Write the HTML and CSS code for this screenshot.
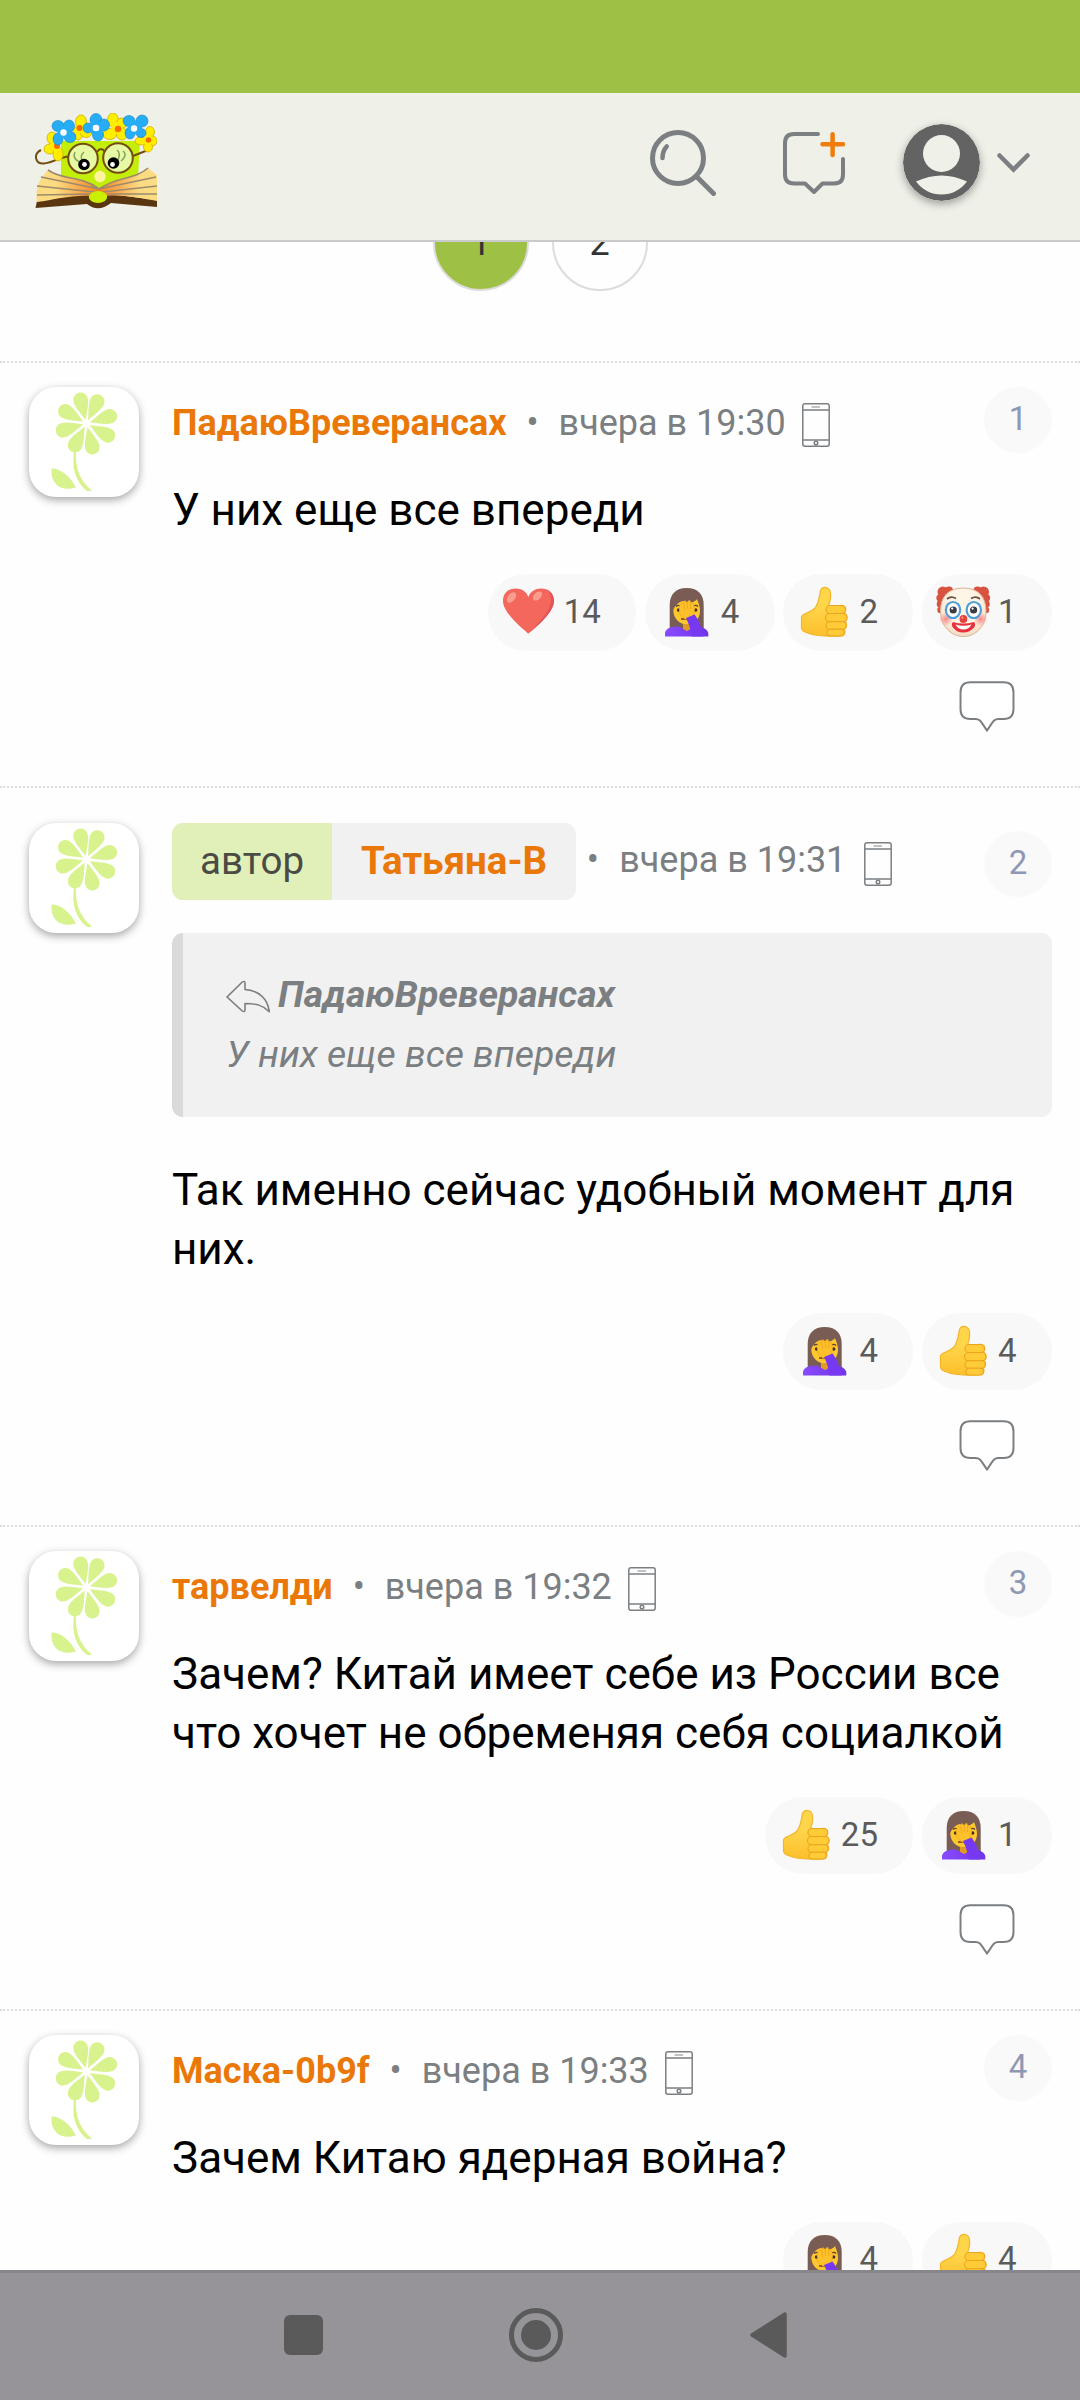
FILE: index.html
```
<!DOCTYPE html>
<html lang="ru">
<head>
    <meta charset="UTF-8">
    <meta name="viewport" content="width=device-width, initial-scale=1.0">
    <title>Форум</title>
    <link rel="stylesheet" href="styles.css">
</head>
<body>
    <!-- shared icons -->
    <svg class="sprite" width="0" height="0">
        <defs>
            <linearGradient id="thumbFill" x1="0" y1="0" x2="0" y2="1">
                <stop offset="0.4" stop-color="#ffd54a"/>
                <stop offset="1" stop-color="#fcbf2b"/>
            </linearGradient>
            <linearGradient id="sleeve" x1="0" y1="0" x2="1" y2="0">
                <stop offset="0" stop-color="#8a4bff"/>
                <stop offset="1" stop-color="#6f33e8"/>
            </linearGradient>
            <radialGradient id="clownFace" cx="0.5" cy="0.4" r="0.6">
                <stop offset="0.6" stop-color="#fff5e6"/>
                <stop offset="1" stop-color="#f5d9c0"/>
            </radialGradient>
            <radialGradient id="cheek">
                <stop offset="0" stop-color="#fa8a8a"/>
                <stop offset="1" stop-color="#fa8a8a" stop-opacity="0"/>
            </radialGradient>
            <linearGradient id="pageLeft" x1="0" y1="0" x2="1" y2="0">
                <stop offset="0.3" stop-color="#fbdc83"/>
                <stop offset="1" stop-color="#f58220"/>
            </linearGradient>
            <linearGradient id="pageRight" x1="1" y1="0" x2="0" y2="0">
                <stop offset="0.3" stop-color="#fbdc83"/>
                <stop offset="1" stop-color="#f58220"/>
            </linearGradient>
            <path id="petal" d="M0 -3.5 C-2 -9 -7.3 -18 -7.3 -24.5 A7.3 7.3 0 0 1 7.3 -24.5 C7.3 -18 2 -9 0 -3.5Z"/>
        </defs>
        <symbol id="flower" viewBox="0 0 110 110">
            <g fill="#d8f28d">
                <g transform="translate(57.5 36.5)">
                    <use href="#petal" transform="rotate(-14)"/>
                    <use href="#petal" transform="rotate(26)"/>
                    <use href="#petal" transform="rotate(73)"/>
                    <use href="#petal" transform="rotate(119)"/>
                    <use href="#petal" transform="rotate(166)"/>
                    <use href="#petal" transform="rotate(208)"/>
                    <use href="#petal" transform="rotate(254)"/>
                    <use href="#petal" transform="rotate(300)"/>
                </g>
                <path d="M45.3 63 H47 C46 82 51 93 63 104 H58 C47 95 42 82 45.3 63Z"/>
                <path d="M22.5 81.5 C31 81 41 89 47 100.5 C33 105 21 98 22.5 81.5Z"/>
            </g>
        </symbol>
        <symbol id="phone" viewBox="0 0 28 44">
            <g fill="none" stroke="#7b7f82" stroke-width="1.5">
                <rect x="0.8" y="0.8" width="26.4" height="42.4" rx="2.2"/>
                <path d="M1 7H27M1 37H27"/>
                <path d="M9.5 4H18" stroke="#bbb" stroke-width="1.8"/>
                <circle cx="14" cy="40" r="1.8"/>
            </g>
        </symbol>
        <symbol id="bubble" viewBox="0 0 56 52">
            <path d="M11 1.2H45Q55 1.2 55 11.5V28.5Q55 38.7 45 38.7H39.5C35 38.7 34 42 28 50.5C22 42 21 38.7 16.5 38.7H11Q1 38.7 1 28.5V11.5Q1 1.2 11 1.2Z" fill="#fff" stroke="#7b7f82" stroke-width="2"/>
        </symbol>
        <symbol id="heart" viewBox="0 0 55 52">
            <path d="M26.3 47.8C24 45 1 28 1 15C1 7 6.5 2.5 13.5 2.5C20 2.5 24.5 5.5 26.3 11C28.5 5.5 33 2.5 39 2.5C46.5 2.5 52 7 52 15C52 28 29 45 26.3 47.8Z" fill="#f4675c"/>
            <path d="M45 3.8C49.5 6 52 10 52 15C52 28 29 45 26.3 47.8C34 39 49 26 49 14C49 9 47.5 6 45 3.8Z" fill="#e0555a"/>
            <ellipse cx="9.5" cy="11.5" rx="3.6" ry="6" transform="rotate(38 9.5 11.5)" fill="#fb9c90"/>
            <ellipse cx="35.5" cy="10" rx="3.5" ry="5.5" transform="rotate(45 35.5 10)" fill="#fb9c90"/>
        </symbol>
        <symbol id="facepalm" viewBox="0 0 55 52">
            <path d="M27.7 2C17 2 10.7 8 10.7 19V43H44.7V19C44.7 8 38.5 2 27.7 2Z" fill="#795d54"/>
            <path d="M24 34H32V45H24Z" fill="#e59f1b"/>
            <path d="M14.3 24C16 20 19 16 24 15C31 19 37 15 38 13C40 18 41 21 41 25C41 33 35 38.5 28 38.5C20 38.5 14.3 32 14.3 24Z" fill="#fcc72f"/>
            <path d="M17 20.5Q19 18.5 21.5 20M34.5 20Q37 18.5 39 20.5" stroke="#5d4037" stroke-width="1.4" fill="none"/>
            <circle cx="19.5" cy="24" r="1.7" fill="#42301f"/>
            <circle cx="36.7" cy="24" r="1.7" fill="#42301f"/>
            <path d="M22 33L29 33" stroke="#7a4a12" stroke-width="1.6"/>
            <path d="M6 50.5V47C7 42 12 40.5 20 40.5L28 45L36 40.5C44 40.5 48 43 49.3 47V50.5Z" fill="url(#sleeve)"/>
            <path d="M24.5 41L28 45L31.5 41V38H24.5Z" fill="#e09a25"/>
            <path d="M21 29L20 21L22.5 16.5L24 18L26 14.5L28 16.5L30.5 14L32 17L34.5 17L35.5 23L34.5 29L30 33L26 33Z" fill="#fcc02a" stroke="#f3a71c" stroke-width="0.7"/>
            <path d="M24.5 17.5L26 24M28 16.5L28.7 23M31.8 17L31.5 23" stroke="#eda31c" stroke-width="0.8"/>
            <path d="M27 32L35.5 28.5C39 33 43 41 44.5 50.5H32.5C32 44 30 38 27 32Z" fill="#7638f0"/>
        </symbol>
        <symbol id="thumb" viewBox="0 0 55 52">
            <path d="M4.5 31C5 27 13 27.5 18 22C22 17 22.5 9 23.5 4.5C24.3 1.5 27.5 0.8 30.5 2C33.5 3.5 34 8 33.5 12C33.2 15.5 32 18 31.5 20.5L44.5 19.3C49 19.5 50 24 47.5 27C51 29 50.8 33.5 48.3 35.3C50.5 38 50 41.5 47.5 43C49 47 47 50 43.5 50C33 50.5 20 50.5 12 47.5C8.5 46.5 4.5 45 4.5 42Z" fill="url(#thumbFill)" stroke="#f3b52c" stroke-width="1.2"/>
            <g fill="#ffcb37" stroke="#eca521" stroke-width="1.1">
                <rect x="29" y="19.5" width="19.5" height="8" rx="3.8"/>
                <rect x="28.5" y="27.5" width="21.5" height="8.2" rx="4"/>
                <rect x="29" y="35.7" width="20.2" height="7.6" rx="3.8"/>
                <rect x="30" y="43.3" width="17.3" height="6.7" rx="3.3"/>
            </g>
        </symbol>
        <symbol id="clown" viewBox="0 0 55 52">
            <g fill="#d9523f">
                <circle cx="7" cy="6" r="5.5"/><circle cx="13" cy="4.5" r="4"/><circle cx="4.5" cy="12" r="4.2"/><circle cx="4.5" cy="18" r="3.8"/><circle cx="4.5" cy="24" r="3.2"/>
                <circle cx="47.5" cy="6" r="5.5"/><circle cx="41.5" cy="4.500" r="4"/><circle cx="50" cy="12" r="4.2"/><circle cx="50" cy="18" r="3.8"/><circle cx="50" cy="24" r="3.2"/>
            </g>
            <path d="M27.3 2C12 2 4.5 11 4.5 25C4.5 40 15 50.5 27.3 50.5C40 50.5 50 40 50 25C50 11 42.500 2 27.3 2Z" fill="url(#clownFace)" stroke="#d7b59b" stroke-width="1"/>
            <circle cx="10" cy="33" r="7" fill="url(#cheek)"/>
            <circle cx="44.5" cy="33" r="7" fill="url(#cheek)"/>
            <path d="M11 13Q15 9.5 20 12.5M35 12.5Q40 9.5 44 13" stroke="#6d4c41" stroke-width="1.7" fill="none"/>
            <g fill="#fff" stroke="#4f9fd6" stroke-width="2.2">
                <ellipse cx="17" cy="24" rx="7.2" ry="8"/>
                <ellipse cx="37.8" cy="24" rx="7.2" ry="8"/>
            </g>
            <circle cx="17.2" cy="24" r="3.6" fill="#3b3b46"/>
            <circle cx="37.6" cy="24" r="3.6" fill="#3b3b46"/>
            <circle cx="16.2" cy="22.6" r="1.1" fill="#fff"/>
            <circle cx="36.6" cy="22.6" r="1.1" fill="#fff"/>
            <path d="M17 36Q27.3 39 38 36Q40 38 38.5 41Q34 46.5 27.3 46.5Q20.5 46.5 16.5 41Q15 38 17 36Z" fill="#e8313c"/>
            <path d="M19.5 38.5Q27.3 41 35.5 38.5Q33 43.5 27.3 43.5Q22 43.5 19.5 38.5Z" fill="#fff"/>
            <circle cx="27.4" cy="33" r="3.9" fill="#e5403c"/>
            <circle cx="26.4" cy="31.7" r="1.1" fill="#ff9187"/>
        </symbol>
    </svg>

    <div class="screen">
        <div class="status-bar"></div>

        <header class="header">
            <svg class="logo" viewBox="0 0 122 96">
                <path d="M26 28H105L103 64L90 66L64 76L26 64Z" fill="#c3ee0a"/>
                <!-- book -->
                <path d="M0.5 95L2 88L50 81H74L122 87V94L76 90Q63 100 52 91Z" fill="#5a3610"/>
                <path d="M13 57C28 68 46 62 64 76V84C45 80 22 86 2 89C0 75 4 66 13 57Z" fill="url(#pageLeft)"/>
                <path d="M113 55C98 68 84 62 64 76V84C84 80 104 85 122 88V62Z" fill="url(#pageRight)"/>
                <path d="M13 57C28 68 46 62 64 76C84 62 98 68 113 55M6 64L64 76L121 64M2 73L60 79M122 73L68 79M2 82L56 81M122 81L72 81" fill="none" stroke="#9d8a6d" stroke-width="1.6"/>
                <ellipse cx="63" cy="84" rx="9.2" ry="6" fill="#c8f000"/>
                <circle cx="65" cy="63.5" r="5.7" fill="#fff49c"/>
                <!-- glasses -->
                <path d="M6 37C-2 41 0 51 9 50.5C17 50 25 44 34 43.5M98 43L113 37M62 39Q66 33 70 39" fill="none" stroke="#734d12" stroke-width="2"/>
                <circle cx="48" cy="45.5" r="14.8" fill="#e6f9a3" stroke="#734d12" stroke-width="2"/>
                <circle cx="83" cy="45" r="14.8" fill="#e6f9a3" stroke="#734d12" stroke-width="2"/>
                <path d="M40 39Q37 45 44 49M49 39Q44 43 48 49M82 37Q86 40 83 47M88 38Q93 42 86 48" fill="none" stroke="#8ba064" stroke-width="1.5"/>
                <circle cx="49" cy="51.5" r="5.8" fill="#000"/>
                <circle cx="78.5" cy="50" r="5.8" fill="#000"/>
                <circle cx="49.5" cy="51.5" r="2.4" fill="#fff"/>
                <circle cx="77.5" cy="51.5" r="2.4" fill="#fff"/>
                <!-- wreath -->
                <g fill="#ffee00" stroke="#cfae00" stroke-width="0.8">
                    <ellipse cx="17" cy="25" rx="5" ry="6"/><ellipse cx="15" cy="36" rx="6" ry="5"/><ellipse cx="23" cy="41" rx="5" ry="7"/>
                    <ellipse cx="46" cy="9" rx="5.5" ry="7"/><ellipse cx="43" cy="20" rx="5" ry="7"/><ellipse cx="51" cy="19" rx="6" ry="5.5"/>
                    <ellipse cx="78" cy="7" rx="5.5" ry="7"/><ellipse cx="75" cy="21" rx="7" ry="5.5"/><ellipse cx="87" cy="10" rx="5.5" ry="5"/><ellipse cx="87" cy="21" rx="5.5" ry="6"/>
                    <ellipse cx="115" cy="19" rx="4.5" ry="5.5"/><ellipse cx="106" cy="28" rx="6" ry="4"/><ellipse cx="117" cy="28" rx="5" ry="5"/><ellipse cx="113" cy="34" rx="4.5" ry="5"/>
                </g>
                <g fill="#ffee00">
                    <circle cx="20" cy="33" r="5"/><circle cx="46" cy="15" r="5"/><circle cx="82" cy="15" r="6"/><circle cx="113" cy="27" r="5"/>
                </g>
                <g fill="#ff6a00">
                    <circle cx="22" cy="33" r="3"/><circle cx="44.5" cy="15" r="3"/><circle cx="83" cy="16" r="3.2"/><circle cx="113.5" cy="27" r="2.8"/>
                </g>
                <g fill="#26adf5" stroke="#1585c4" stroke-width="0.6">
                    <ellipse cx="23" cy="13" rx="6" ry="5.5"/><ellipse cx="34" cy="13" rx="5.5" ry="6"/><ellipse cx="23" cy="26" rx="5" ry="6"/><ellipse cx="35" cy="24" rx="6" ry="5.5"/>
                    <ellipse cx="61" cy="7" rx="6" ry="6.5"/><ellipse cx="53" cy="15" rx="5" ry="5"/><ellipse cx="69" cy="12" rx="5.5" ry="6"/><ellipse cx="63" cy="22" rx="5.5" ry="6"/>
                    <ellipse cx="94" cy="8" rx="6" ry="5.5"/><ellipse cx="107" cy="8" rx="6" ry="6"/><ellipse cx="95" cy="20" rx="5" ry="6"/><ellipse cx="106" cy="20" rx="5" ry="4.5"/>
                </g>
                <g fill="#26adf5">
                    <circle cx="29" cy="19" r="6.5"/><circle cx="61" cy="15" r="7"/><circle cx="100" cy="14.5" r="7"/>
                </g>
                <g fill="#fff">
                    <circle cx="28.5" cy="19.5" r="3.2"/><circle cx="61" cy="15" r="3.3"/><circle cx="99" cy="15.5" r="3.2"/>
                </g>
            </svg>
            <div class="header-actions">
                <svg class="icon-search" viewBox="0 0 66 66" fill="none" stroke="#7b7f82" stroke-width="5" stroke-linecap="round">
                    <circle cx="28" cy="28" r="25.5"/>
                    <path d="M46.5 46.5L63.5 63.5"/>
                    <path d="M16.7 16.5Q12.5 21 12.5 28" stroke-width="4.5"/>
                </svg>
                <svg class="icon-new" viewBox="0 0 62 62" fill="none" stroke="#7b7f82" stroke-width="4" stroke-linejoin="round" stroke-linecap="round">
                    <path d="M35 2H11Q2 2 2 11V42.5Q2 51.5 11 51.5H22L31 60L39.5 51.5H51Q60 51.5 60 42.5V27"/>
                    <path d="M39.5 12.3H60M49.6 2.3V23" stroke="#ee7d0c" stroke-width="4.5"/>
                </svg>
                <svg class="icon-user" viewBox="0 0 77 77">
                    <circle cx="38.5" cy="38.5" r="38.5" fill="#636363"/>
                    <circle cx="38.5" cy="29.5" r="18.5" fill="#eff0e8"/>
                    <path d="M13 57.5Q38.5 45.5 64 57.5Q54 70.5 38.5 70.5Q23 70.5 13 57.5Z" fill="#eff0e8"/>
                </svg>
                <svg class="icon-chevron" viewBox="0 0 33 20">
                    <path d="M2.5 2.5L16.5 16.5L30.5 2.5" fill="none" stroke="#7b7f82" stroke-width="4.5" stroke-linecap="round"/>
                </svg>
            </div>
        </header>

        <main class="feed">
            <nav class="pages">
                <a class="page current">1</a>
                <a class="page">2</a>
            </nav>

            <article class="comment">
                <svg class="avatar"><use href="#flower"/></svg>
                <div class="content">
                    <div class="meta">
                        <a class="name">ПадаюВреверансах</a>
                        <span class="dot">•</span>
                        <span class="date">вчера в 19:30</span>
                        <svg class="phone"><use href="#phone"/></svg>
                        <span class="number">1</span>
                    </div>
                    <p class="text">У них еще все впереди</p>
                    <div class="reactions">
                        <span class="reaction"><svg class="emoji"><use href="#heart"/></svg>14</span>
                        <span class="reaction"><svg class="emoji"><use href="#facepalm"/></svg>4</span>
                        <span class="reaction"><svg class="emoji"><use href="#thumb"/></svg>2</span>
                        <span class="reaction"><svg class="emoji"><use href="#clown"/></svg>1</span>
                    </div>
                    <svg class="reply"><use href="#bubble"/></svg>
                </div>
            </article>

            <article class="comment by-author">
                <svg class="avatar"><use href="#flower"/></svg>
                <div class="content">
                    <div class="meta">
                        <div class="author">
                            <span class="author-label">автор</span>
                            <a class="name">Татьяна-В</a>
                        </div>
                        <span class="dot">•</span>
                        <span class="date">вчера в 19:31</span>
                        <svg class="phone"><use href="#phone"/></svg>
                        <span class="number">2</span>
                    </div>
                    <blockquote class="quote">
                        <div class="quote-name">
                            <svg class="quote-icon" viewBox="0 0 44 38" preserveAspectRatio="none">
                                <path d="M1 19.5L16 2.5Q19 0 19 4V11C33 12 42 22 43.3 36.5C37 29 30 27 19 27V34Q19 38 16 35.5Z" fill="none" stroke="#7b7f82" stroke-width="1.6" stroke-linejoin="round"/>
                            </svg>
                            <span>ПадаюВреверансах</span>
                        </div>
                        <p class="quote-text">У них еще все впереди</p>
                    </blockquote>
                    <p class="text">Так именно сейчас удобный момент для них.</p>
                    <div class="reactions">
                        <span class="reaction"><svg class="emoji"><use href="#facepalm"/></svg>4</span>
                        <span class="reaction"><svg class="emoji"><use href="#thumb"/></svg>4</span>
                    </div>
                    <svg class="reply"><use href="#bubble"/></svg>
                </div>
            </article>

            <article class="comment">
                <svg class="avatar"><use href="#flower"/></svg>
                <div class="content">
                    <div class="meta">
                        <a class="name">тарвелди</a>
                        <span class="dot">•</span>
                        <span class="date">вчера в 19:32</span>
                        <svg class="phone"><use href="#phone"/></svg>
                        <span class="number">3</span>
                    </div>
                    <p class="text">Зачем? Китай имеет себе из России все что хочет не обременяя себя социалкой</p>
                    <div class="reactions">
                        <span class="reaction"><svg class="emoji"><use href="#thumb"/></svg>25</span>
                        <span class="reaction"><svg class="emoji"><use href="#facepalm"/></svg>1</span>
                    </div>
                    <svg class="reply"><use href="#bubble"/></svg>
                </div>
            </article>

            <article class="comment">
                <svg class="avatar"><use href="#flower"/></svg>
                <div class="content">
                    <div class="meta">
                        <a class="name">Маска-0b9f</a>
                        <span class="dot">•</span>
                        <span class="date">вчера в 19:33</span>
                        <svg class="phone"><use href="#phone"/></svg>
                        <span class="number">4</span>
                    </div>
                    <p class="text">Зачем Китаю ядерная война?</p>
                    <div class="reactions">
                        <span class="reaction"><svg class="emoji"><use href="#facepalm"/></svg>4</span>
                        <span class="reaction"><svg class="emoji"><use href="#thumb"/></svg>4</span>
                    </div>
                </div>
            </article>
        </main>

        <footer class="system-nav">
            <svg class="nav-recent" viewBox="0 0 39 40"><rect width="39" height="40" rx="6" fill="#5a5a5a"/></svg>
            <svg class="nav-home" viewBox="0 0 54 54">
                <circle cx="27" cy="27" r="24.5" fill="none" stroke="#5a5a5a" stroke-width="5"/>
                <circle cx="27" cy="27" r="15" fill="#5a5a5a"/>
            </svg>
            <svg class="nav-back" viewBox="0 0 37 46"><path d="M2 23L35 2V44Z" fill="#5a5a5a" stroke="#5a5a5a" stroke-width="3.5" stroke-linejoin="round"/></svg>
        </footer>
    </div>
</body>
</html>
```
FILE: styles.css
```
* {
    box-sizing: border-box;
}
body {
    margin: 0;
    font-family: Roboto, "Noto Sans", sans-serif;
    font-size: 36px;
    color: #000;
    background: #fefefe;
}
svg {
    display: block;
    flex-shrink: 0;
}
.sprite {
    position: absolute;
}
.screen {
    display: flex;
    flex-direction: column;
    width: 1080px;
    height: 2400px;
    overflow: hidden;
}
.status-bar {
    height: 93px;
    flex-shrink: 0;
    background: #9dc045;
}

/* header */
.header {
    display: flex;
    justify-content: space-between;
    height: 149px;
    flex-shrink: 0;
    padding: 20px 50px 0 35px;
    background: #eff0e8;
    border-bottom: 2px solid #c9cacb;
}
.logo {
    width: 122px;
    height: 96px;
}
.header-actions {
    display: flex;
    align-items: center;
    height: 100px;
}
.icon-search {
    width: 66px;
    height: 66px;
    margin-right: 67px;
}
.icon-new {
    width: 62px;
    height: 62px;
    margin-right: 58px;
}
.icon-user {
    width: 77px;
    height: 77px;
    margin: 0 17px 1px 0;
    border-radius: 50%;
    box-shadow: 0 3px 8px rgba(0, 0, 0, 0.35);
}
.icon-chevron {
    width: 33px;
    height: 20px;
}

/* feed */
.feed {
    flex: 1;
    min-height: 0;
    overflow: hidden;
}
.pages {
    display: flex;
    justify-content: center;
    gap: 23px;
    margin-top: -47px;
    padding-bottom: 70px;
}
.page {
    width: 96px;
    height: 96px;
    border: 2px solid #dcdcdc;
    border-radius: 50%;
    line-height: 92px;
    text-align: center;
    color: #333;
}
.page.current {
    background: #9dc045;
}
.comment {
    display: flex;
    gap: 33px;
    padding: 24px 28px 53.5px 29px;
    border-top: 2px dotted #ddd;
}
.by-author {
    padding-top: 35.5px;
}
.avatar {
    width: 110px;
    height: 110px;
    border-radius: 27px;
    background: #fff;
    box-shadow: 0 3px 8px rgba(0, 0, 0, 0.35);
}
.content {
    flex: 1;
    min-width: 0;
}
.meta {
    display: flex;
    align-items: flex-start;
    height: 66px;
    margin-bottom: 28px;
    line-height: 72px;
    white-space: nowrap;
    color: #7b7f82;
}
.name {
    font-weight: 700;
    color: #ea7808;
}
.dot {
    width: 52px;
    text-align: center;
}
.phone {
    width: 28px;
    height: 44px;
    margin: 16px 0 0 16px;
}
.number {
    width: 68px;
    height: 66px;
    margin-left: auto;
    border-radius: 50%;
    background: #f9f9f9;
    font-size: 33px;
    line-height: 64px;
    text-align: center;
    color: #8e97b3;
}
.by-author .meta {
    height: 77px;
    margin-bottom: 33px;
    line-height: 75px;
}
.by-author .dot {
    width: 43px;
    padding-right: 10px;
}
.by-author .phone {
    margin: 19px 0 0 18px;
}
.by-author .number {
    margin-top: 8px;
    line-height: 64px;
}
.author {
    display: flex;
    height: 77px;
    padding-right: 29px;
    border-radius: 11px;
    overflow: hidden;
    background: #f1f1f1;
    font-size: 38.5px;
}
.author-label {
    margin-right: 29px;
    padding: 0 28px;
    background: #e1efb9;
    color: #4b4b45;
}
.quote {
    height: 184px;
    margin: 0 0 43.5px;
    padding: 32px 44px 32px 43px;
    border-left: 11px solid #dadada;
    border-radius: 11px;
    background: #f1f1f1;
    font-size: 37.4px;
    font-style: italic;
    line-height: 59.5px;
    color: #7b7f82;
}
.quote-name {
    display: flex;
    gap: 8px;
    font-weight: 700;
}
.quote-icon {
    width: 44px;
    height: 33px;
    margin-top: 15px;
}
.quote-text {
    margin: 0;
}
.text {
    margin: 0 0 33.5px;
    font-size: 44px;
    line-height: 59.5px;
}
.reactions {
    display: flex;
    justify-content: flex-end;
    gap: 8.5px;
}
.reaction {
    display: flex;
    align-items: center;
    gap: 7px;
    height: 77px;
    padding: 0 35.5px 2px 14px;
    border-radius: 38px;
    background: #f8f8f8;
    font-size: 33px;
    line-height: 74px;
    color: #5b5b5b;
}
.emoji {
    width: 55px;
    height: 52px;
}
.reply {
    width: 56px;
    height: 51px;
    margin: 30px 37px 0 auto;
}

/* android buttons */
.system-nav {
    display: flex;
    align-items: center;
    height: 130px;
    flex-shrink: 0;
    padding: 0 0 3px 284px;
    border-top: 3px solid #87868b;
    background: #969499;
}
.nav-recent {
    width: 39px;
    height: 40px;
    margin-right: 186px;
}
.nav-home {
    width: 54px;
    height: 54px;
    margin-right: 187px;
}
.nav-back {
    width: 37px;
    height: 46px;
}
```
